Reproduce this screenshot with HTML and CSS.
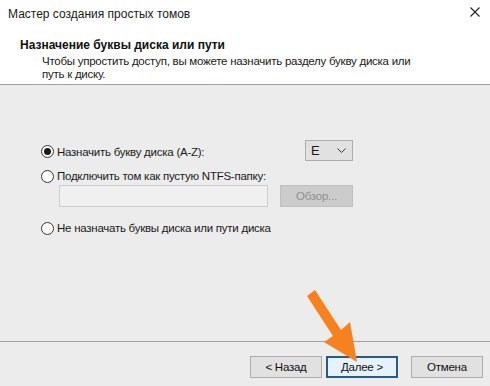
FILE: index.html
```html
<!DOCTYPE html>
<html lang="ru">
<head>
    <meta charset="UTF-8">
    <title>Мастер создания простых томов</title>
    <link rel="stylesheet" href="styles.css">
</head>
<body>
    <div class="titlebar">
        <span class="title">Мастер создания простых томов</span>
        <svg class="close" width="10" height="10" viewBox="0 0 10 10">
            <path d="M0.5 0.5 L9.5 9.5 M9.5 0.5 L0.5 9.5" stroke="#222" stroke-width="1.1" fill="none"/>
        </svg>
    </div>

    <div class="header">
        <h1>Назначение буквы диска или пути</h1>
        <p>Чтобы упростить доступ, вы можете назначить разделу букву диска или<br>путь к диску.</p>
    </div>

    <div class="content">
        <div class="options">
            <div class="row row-first">
                <span class="radio checked"></span>
                <span class="label">Назначить букву диска (A-Z):</span>
                <div class="combo">
                    <span>E</span>
                    <svg width="9" height="5" viewBox="0 0 9 5">
                        <path d="M0.5 0.5 L4.5 4.5 L8.5 0.5" stroke="#333" stroke-width="1" fill="none"/>
                    </svg>
                </div>
            </div>
            <div class="row row-second">
                <span class="radio"></span>
                <span class="label">Подключить том как пустую NTFS-папку:</span>
            </div>
            <div class="path-row">
                <div class="textbox"></div>
                <div class="btn disabled">Обзор...</div>
            </div>
            <div class="row row-third">
                <span class="radio"></span>
                <span class="label">Не назначать буквы диска или пути диска</span>
            </div>
        </div>
    </div>

    <div class="footer">
        <div class="btn">&lt; Назад</div>
        <div class="btn focused">Далее &gt;</div>
        <div class="btn cancel">Отмена</div>
    </div>

    <svg class="arrow" width="490" height="386" viewBox="0 0 490 386">
        <path d="M307 296 L315 290 L341 330 L350 322 L357 362 L324 342 L333 336 Z" fill="#f5821f"/>
    </svg>
</body>
</html>
```

FILE: styles.css
```css
* {
    box-sizing: border-box;
    margin: 0;
    padding: 0;
}

body {
    width: 490px;
    height: 386px;
    overflow: hidden;
    position: relative;
    background: #ececec;
    font-family: 'Liberation Sans', Arial, sans-serif;
    font-size: 11.5px;
    letter-spacing: -0.25px;
    color: #1a1a1a;
}

.titlebar {
    height: 29px;
    background: #fff;
    display: flex;
    align-items: center;
    justify-content: space-between;
    padding: 0 10px 0 8px;
    font-size: 12px;
    letter-spacing: 0;
}

.title {
    line-height: 14px;
    margin-top: -1px;
}

.close {
    margin-top: -5px;
}

.header {
    background: #fff;
    padding: 9px 0 3px 20px;
    height: 56px;
    border-bottom: 1px solid #a0a0a0;
}

.header h1 {
    font-size: 12px;
    font-weight: 700;
    letter-spacing: 0;
    line-height: 14px;
    color: #111;
}

.header p {
    margin-top: 3px;
    padding-left: 22px;
    line-height: 13px;
}

.content {
    height: 257px;
    border-bottom: 1px solid #a0a0a0;
}

.options {
    padding: 55px 137px 0 41px;
}

.row {
    display: flex;
    align-items: center;
    height: 16px;
}

.row-first {
    height: 21px;
}

.row-second {
    margin-top: 7px;
}

.row-third {
    margin-top: 13px;
}

.radio {
    width: 13px;
    height: 13px;
    border: 1px solid #333;
    border-radius: 50%;
    background: #fff;
    display: flex;
    align-items: center;
    justify-content: center;
    margin-right: 3px;
}

.row-first .radio {
    margin-top: 2px;
}

.row-first .label {
    margin-top: 2px;
}

.radio.checked::after {
    content: "";
    width: 7px;
    height: 7px;
    border-radius: 50%;
    background: #1a1a1a;
}

.combo {
    margin-left: auto;
    width: 48px;
    height: 21px;
    background: #e1e1e1;
    border: 1px solid #adadad;
    display: flex;
    align-items: center;
    justify-content: space-between;
    padding: 0 6px 0 5px;
    font-size: 13px;
    letter-spacing: 0;
}

.path-row {
    display: flex;
    align-items: center;
    justify-content: space-between;
    margin-top: 1px;
    padding-left: 18px;
}

.textbox {
    width: 209px;
    height: 22px;
    background: #f0f0f0;
    border: 1px solid #cfcfcf;
}

.btn {
    width: 72px;
    height: 22px;
    background: #e1e1e1;
    border: 1px solid #adadad;
    display: flex;
    align-items: center;
    justify-content: center;
    color: #111;
}

.btn.disabled {
    width: 73px;
    background: #cccccc;
    border-color: #bfbfbf;
    color: #8f8f8f;
}

.footer {
    display: flex;
    justify-content: flex-end;
    padding: 14px 7px 0 0;
}

.footer .btn {
    margin-left: 4px;
}

.btn.focused {
    background: #e5f1fb;
    border: 2px solid #2b5a85;
}

.btn.cancel {
    margin-left: 13px;
}

.arrow {
    position: absolute;
    left: 0;
    top: 0;
}
```
